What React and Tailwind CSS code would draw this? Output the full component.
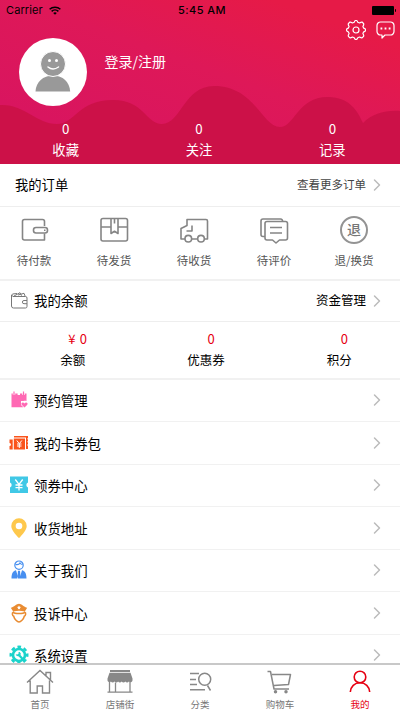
import { ChevronRight } from 'lucide-react'

const stats = [
  { label: '收藏', value: 0 },
  { label: '关注', value: 0 },
  { label: '记录', value: 0 },
]

const balances = [
  { label: '余额', value: '¥ 0' },
  { label: '优惠券', value: '0' },
  { label: '积分', value: '0' },
]

const orders = [
  { label: '待付款', icon: PayIcon },
  { label: '待发货', icon: BoxIcon },
  { label: '待收货', icon: TruckIcon },
  { label: '待评价', icon: ReviewIcon },
  { label: '退/换货', icon: RefundIcon },
]

const menu = [
  { label: '预约管理', icon: BookingIcon },
  { label: '我的卡券包', icon: CardsIcon },
  { label: '领券中心', icon: CouponIcon },
  { label: '收货地址', icon: PinIcon },
  { label: '关于我们', icon: AboutIcon },
  { label: '投诉中心', icon: OfficerIcon },
  { label: '系统设置', icon: SettingsIcon },
]

const tabs = [
  { label: '首页', icon: HomeIcon },
  { label: '店铺街', icon: StoreIcon },
  { label: '分类', icon: CategoryIcon },
  { label: '购物车', icon: CartIcon },
  { label: '我的', icon: MeIcon, active: true },
]

function OrderSvg({ children }) {
  return (
    <svg width="30" height="30" viewBox="0 0 30 30" fill="none" stroke="#858585" strokeWidth="1.600" strokeLinejoin="round">
      {children}
    </svg>
  )
}

function PayIcon() {
  return (
    <OrderSvg>
      <path d="M24.500 11V6.500a2 2 0 0 0-2-2H4.500a2 2 0 0 0-2 2V23a2 2 0 0 0 2 2h20v-6.500" />
      <rect x="13.500" y="12.500" width="14" height="5.500" rx="2.500" />
      <path d="M24 15.200h1.500" />
    </OrderSvg>
  )
}

function BoxIcon() {
  return (
    <OrderSvg>
      <rect x="1" y="3.500" width="26.500" height="22.500" rx="2" />
      <path d="M1 12h10M18 12h9.500M11 3.500v15l3.500-2.200 3.500 2.200v-15M14.500 3.500v5" />
    </OrderSvg>
  )
}

function TruckIcon() {
  return (
    <OrderSvg>
      <path d="M5 24H1v-10.500L7 10.500V4.500H26a1.500 1.500 0 0 1 1.500 1.500V24h-3M12 24h5.500M12 10.500v5.500H6.500" />
      <circle cx="8.300" cy="23.700" r="3.300" />
      <circle cx="21" cy="23.700" r="3.300" />
    </OrderSvg>
  )
}

function ReviewIcon() {
  return (
    <OrderSvg>
      <path d="M5 21.500H3a2 2 0 0 1-2-2V6a2 2 0 0 1 2-2H20.500a2 2 0 0 1 2 2.500" />
      <path d="M7 6.500H25.500a2 2 0 0 1 2 2V23a2 2 0 0 1-2 2h-6L16 28l-3.500-3H7a2 2 0 0 1-2-2V8.500a2 2 0 0 1 2-2z" />
      <path d="M10 12.500h12M10 18h12" />
    </OrderSvg>
  )
}

function RefundIcon() {
  return (
    <span className="mr-0.5 flex h-7 w-7 items-center justify-center rounded-full border-2 border-[#939393] text-[14px] leading-none font-medium text-[#777]">
      <span className="-mt-0.5">退</span>
    </span>
  )
}

function WalletIcon() {
  return (
    <svg width="18" height="18" viewBox="0 0 18 18" fill="none" stroke="#777" strokeWidth="1" strokeLinejoin="round">
      <path d="M1.500 3v11a2 2 0 0 0 2 2h12a1.500 1.500 0 0 0 1.500-1.500V6a1.500 1.500 0 0 0-1.500-1.500H3a1.500 1.500 0 0 1-.500-2.500L7 1.500" />
      <path d="M4 4L10 .7l1.500 3M8 3l6-1.700 1.200 3" />
      <path d="M17 8.500h-3a1.500 1.500 0 0 0 0 3.200h3" />
    </svg>
  )
}

function BookingIcon() {
  return (
    <svg width="20" height="20" viewBox="0 0 20 20">
      <path d="M2.500 3.500h15V11c-2.500-1-6.500 1-4.500 4.500l1.500 1.800H2.500z" fill="#ff69b4" />
      <path d="M5 1v4M9.800 1v4M14.500 1v4" stroke="#fff" strokeWidth="2.400" />
      <path d="M5 1.500V5M14.500 1.500V5" stroke="#ff69b4" strokeWidth="1.200" />
      <path d="M12 11h7v7h-3.500L12 15z" fill="#fff" />
      <path d="M15.500 17.500l-2.800-2.800c-1.300-2 1.600-3.200 2.800-1.300 1.200-1.900 4.100-.7 2.800 1.300z" fill="#ff69b4" />
    </svg>
  )
}

function CardsIcon() {
  return (
    <svg width="20" height="20" viewBox="0 0 20 20" fill="#fa541c">
      <path d="M.5 6.500H3.700v10H.5v-3.500a1.500 1.500 0 0 0 0-3z" />
      <path d="M5 3h14v2l-.8.700.8 1v1.200l-.8.900.8 1v1.200l-.8.900.8 1V16h-2V4.500H5z" />
      <path d="M4.800 5.500h11.200v11H4.800z" />
      <path d="M7.800 7.500l2.500 3.200 2.500-3.200M10.300 10.700v4.300M8 11h4.500M8 13h4.500" stroke="#fff" fill="none" />
    </svg>
  )
}

function CouponIcon() {
  return (
    <svg width="20" height="20" viewBox="0 0 20 20">
      <path d="M1 1.500h18v6a2.700 2.700 0 0 0 0 5V18H1v-5.500a2.700 2.700 0 0 0 0-5z" fill="#40c8e6" />
      <path d="M6.300 4.500l3.700 5 3.700-5M10 9.500v6M6.500 10h7M6.500 12.700h7" stroke="#fff" strokeWidth="1.300" fill="none" />
    </svg>
  )
}

function PinIcon() {
  return (
    <svg width="20" height="20" viewBox="0 0 20 20">
      <path d="M10 .3A7.700 7.700 0 0 0 2.300 8C2.300 12.300 6.500 16 9 19.300q1 1 2 0c2.500-3.300 6.700-7 6.700-11.300A7.700 7.700 0 0 0 10 .3z" fill="#fec84c" />
      <circle cx="10" cy="8" r="3.300" fill="#fff" />
    </svg>
  )
}

function AboutIcon() {
  return (
    <svg width="20" height="20" viewBox="0 0 20 20">
      <circle cx="10" cy="5.200" r="4.200" fill="#fff" stroke="#478ff0" strokeWidth="1.200" />
      <path d="M6.500 4.500c2.500.5 4-.5 4.500-1.500.5.800 1.500 1.500 2.500 1.500" stroke="#478ff0" strokeWidth="1.200" fill="none" />
      <path d="M7 10.300C4 11 2.500 13.500 2.500 18.500H9l-1-5zM13 10.300c3 .7 4.500 3.200 4.500 8.200H11l1-5zM9 10.800h2l.7 7.700h-3.400z" fill="#478ff0" />
    </svg>
  )
}

function OfficerIcon() {
  return (
    <svg width="20" height="20" viewBox="0 0 20 20">
      <path d="M1.800 4.800C5 4 7.500.7 10 .7s5 3.300 8.200 4.100L15.800 8.500q-5.800-1.500-11.600 0z" fill="#e98c32" />
      <path d="M10 2.500l.7 1.200 1.300.3-1 1 .1 1.400L10 5.700l-1.100.7L9 5 8 4l1.300-.3z" fill="#fff" />
      <path d="M4.300 9.200C2.700 9.700 3.200 12.700 4.700 13.200 5.500 16.500 8.300 19 10 19s4.500-2.500 5.300-5.800c1.500-.5 2-3.500.4-4-1 1.300-2.700 1.300-5.700 1.300s-4.700 0-5.700-1.300z" fill="none" stroke="#e98c32" strokeWidth="1.500" />
    </svg>
  )
}

function SettingsIcon() {
  return (
    <svg width="20" height="20" viewBox="0 0 20 20" stroke="#1bd3cb" fill="none">
      <circle cx="10" cy="10" r="6" strokeWidth="2.600" />
      <circle cx="10" cy="10" r="8.200" strokeWidth="2.600" strokeDasharray="3.600 2.840" strokeDashoffset="1.800" />
      <path d="M9 9l6.500 7" strokeWidth="2.200" />
      <path d="M7.300 9.500c1 1.800 4 1.200 3.700-1L9.800 7.300" strokeWidth="1.500" />
    </svg>
  )
}

function HomeIcon() {
  return (
    <svg width="28" height="26" viewBox="0 0 28 26" fill="none" stroke="#888" strokeWidth="1.400">
      <path d="M1 13.500L14 1.500l13 12M20 6.500V3.500h4.500V11M4.200 11.500v12.500h7V17h5.300v7h7V11.500" />
    </svg>
  )
}

function StoreIcon() {
  return (
    <svg width="28" height="26" viewBox="0 0 28 26">
      <path d="M4 1h20v2H4zM3.500 3.700h21L26.500 9.500v2a2 2 0 0 1-3.600 1 2.200 2.200 0 0 1-3.600 0 2.200 2.200 0 0 1-3.600 0 2.200 2.200 0 0 1-3.600 0 2.200 2.200 0 0 1-3.600 0 2.200 2.200 0 0 1-3.600 0 2 2 0 0 1-3.400-1v-2z" fill="#888" />
      <path d="M3.500 12.500v10.500M9.500 13.500v9.500M24 12.500v10.500M1.500 23.200h25" stroke="#888" strokeWidth="1.300" />
    </svg>
  )
}

function CategoryIcon() {
  return (
    <svg width="28" height="26" viewBox="0 0 28 26" fill="none" stroke="#888" strokeWidth="1.500">
      <path d="M4 4.500h9M4 10.500h6M4 15.500h7M4 20.700h15M21.500 16.500l3 5" />
      <circle cx="18.700" cy="10.300" r="6" />
    </svg>
  )
}

function CartIcon() {
  return (
    <svg width="28" height="26" viewBox="0 0 28 26" fill="none" stroke="#888" strokeWidth="1.500" strokeLinejoin="round">
      <path d="M1.500 2.500h3l3.500 17.500h15M6 5.500h18.500L22.500 15.500 8 16.500" />
      <circle cx="9.500" cy="22.700" r="1" fill="#888" />
      <circle cx="20" cy="22.700" r="1" fill="#888" />
    </svg>
  )
}

function MeIcon() {
  return (
    <svg width="28" height="26" viewBox="0 0 28 26" fill="none" stroke="#e60012" strokeWidth="1.600">
      <circle cx="14" cy="8" r="5.800" />
      <path d="M4.300 23C4.700 17.500 8.500 13.800 14 13.800s9.300 3.700 9.700 9.200" />
    </svg>
  )
}

function Arrow() {
  return <ChevronRight size={20} strokeWidth={1.800} className="-mr-[3px] text-[#bbb]" />
}

function StatusBar() {
  return (
    <div className="flex h-5 items-center justify-between pr-1 pl-1.5 font-['Inter'] text-[11px] text-black">
      <div className="flex w-24 items-center gap-1.5">
        <span className="tracking-[0.1px]">Carrier</span>
        <svg width="12" height="9" viewBox="0 0 12 9" fill="none" stroke="#000" strokeWidth="1.500">
          <path d="M.6 3.300a7.800 7.800 0 0 1 10.800 0M2.600 5.400a4.900 4.900 0 0 1 6.800 0" />
          <path d="M6 8.800L4.200 7q1.800-1.300 3.600 0z" fill="#000" stroke="none" />
        </svg>
      </div>
      <span className="ml-0.5 font-medium tracking-[0.450px]">5:45 AM</span>
      <div className="flex w-24 items-center justify-end gap-px">
        <span className="h-[9px] w-[22px] rounded-[1px] bg-black" />
        <span className="h-[3px] w-px rounded-r bg-black" />
      </div>
    </div>
  )
}

function Header() {
  return (
    <header className="relative h-[164px] shrink-0 bg-linear-[20deg,#d9155f_20%,#de1858_55%,#e61a47_85%] text-white">
      <svg className="absolute inset-0" width="400" height="164" viewBox="0 0 400 164">
        <path
          d="M0 105C25 104 36 124 57 124C75 124 78 100 113 100C144 100 146 124 162 124C181 124 184 86 214 86C255 86 262 127 280 127C295 127 297 97 328 97C350 97 358 112 363 123C372 114 385 110 400 111V164H0Z"
          fill="#cc1148"
        />
      </svg>
      <div className="relative">
        <StatusBar />
        <div className="flex h-[98px]">
          <div className="mt-[18px] ml-[19px] flex h-[68px] w-[68px] items-center justify-center rounded-full bg-white">
            <svg width="36" height="42" viewBox="0 0 36 42">
              <path d="M.5 40.500C1 31 8 24.500 18 24.500S34.500 31 35.200 40.500z" fill="#999" />
              <circle cx="18" cy="13" r="12.500" fill="#999" stroke="#fff" strokeWidth="1" />
              <circle cx="14.500" cy="9.500" r="1.500" fill="#fff" />
              <circle cx="21.500" cy="9.500" r="1.500" fill="#fff" />
              <path d="M13 16q5 4 10.500 0" stroke="#fff" strokeWidth="1.500" strokeLinecap="round" fill="none" />
            </svg>
          </div>
          <p className="mt-[31px] ml-[17.500px] text-[14px] leading-5">登录/注册</p>
          <div className="mr-[5px] ml-auto flex items-start gap-2.5">
            <svg width="20" height="20" viewBox="0 0 20 20" fill="none" stroke="#fff" strokeWidth="1.200" strokeLinejoin="round">
              <path d="M8.200 2.300Q8.600.5 10 .5t1.800 1.800l1.700.7q3-1.700 3.500.1 1.600.5-.1 3.400l.8 1.700q1.900.4 1.900 1.800t-1.900 1.800l-.8 1.700q1.700 2.900.1 3.400-.5 1.800-3.500.1l-1.700.7Q11.400 19.500 10 19.500t-1.800-1.800L6.500 17q-3 1.700-3.500-.1-1.600-.5.100-3.400l-.8-1.700Q.5 11.400.5 10t1.800-1.800l.8-1.700Q1.400 3.600 3 3.100q.5-1.800 3.500-.1z" />
              <circle cx="10" cy="10" r="3" />
            </svg>
            <svg width="19" height="20" viewBox="0 0 19 20" fill="none" stroke="#fff" strokeWidth="1.200" strokeLinejoin="round">
              <path d="M4.500 2h10A3.500 3.500 0 0 1 18 5.500v6a3.500 3.500 0 0 1-3.500 3.500H9l-3 3v-3H4.500A3.500 3.500 0 0 1 1 11.500v-6A3.500 3.500 0 0 1 4.500 2z" />
              <path d="M4.500 8.500h1.800M8.600 8.500h1.800M12.700 8.500h1.800" strokeWidth="1.800" />
            </svg>
          </div>
        </div>
        <div className="grid grid-cols-3 text-center text-[13.300px]">
          {stats.map(item => (
            <div key={item.label} className="-ml-0.5">
              <p className="leading-[21px]">{item.value}</p>
              <p className="leading-[21px]">{item.label}</p>
            </div>
          ))}
        </div>
      </div>
    </header>
  )
}

export default function App() {
  return (
    <div className="flex h-[711px] w-[400px] flex-col overflow-hidden bg-white font-['Noto_Sans_CJK_SC','Noto_Sans',sans-serif] text-black">
      <Header />

      <main className="min-h-0 flex-1 overflow-hidden">
        <div className="flex h-[43px] items-center border-b border-[#eee] pr-4 pl-[15px]">
          <span className="flex-1 text-[13.300px]">我的订单</span>
          <span className="mr-px text-[11.500px] text-[#444]">查看更多订单</span>
          <Arrow />
        </div>

        <div className="flex h-[74px] border-b-2 border-[#f1f1f1]">
          {orders.map(({ label, icon: Icon }) => (
            <div key={label} className="flex w-20 flex-col items-center pt-2 pr-3">
              <div className="flex h-[30px] items-center pl-0.5">
                <Icon />
              </div>
              <span className="mt-1.5 text-[11.500px] leading-[18px] text-[#555]">{label}</span>
            </div>
          ))}
        </div>

        <div className="flex h-[41px] items-center border-b border-[#eee] pr-4 pl-2.5">
          <WalletIcon />
          <span className="ml-1.5 flex-1 pb-0.5 text-[13.400px]">我的余额</span>
          <span className="mr-px pb-0.5 text-[12.500px]">资金管理</span>
          <Arrow />
        </div>

        <div className="grid h-[57.500px] grid-cols-3 border-b-2 border-[#f1f1f1] pt-1.5 text-center text-[12.500px]">
          {balances.map(item => (
            <div key={item.label} className="pl-3">
              <p className="pl-2.5 text-[13px] leading-[21px] [word-spacing:1.500px] text-[#e60012]">{item.value}</p>
              <p className="leading-[21px]">{item.label}</p>
            </div>
          ))}
        </div>

        {menu.map(({ label, icon: Icon }) => (
          <div key={label} className="flex h-[42.500px] items-center border-b border-[#f1f1f1] pr-4 pl-[9px]">
            <Icon />
            <span className="ml-[5px] flex-1 text-[13.400px] leading-4">{label}</span>
            <Arrow />
          </div>
        ))}
      </main>

      <nav className="grid h-12 shrink-0 grid-cols-5 border-t-2 border-[#c8c8c8] bg-white">
        {tabs.map(({ label, icon: Icon, active }) => (
          <div key={label} className="flex flex-col items-center pt-[4px]">
            <Icon />
            <span className={`mt-[3px] text-[9.500px] leading-[13px] ${active ? 'text-[#e60012]' : 'text-[#777]'}`}>
              {label}
            </span>
          </div>
        ))}
      </nav>
    </div>
  )
}
